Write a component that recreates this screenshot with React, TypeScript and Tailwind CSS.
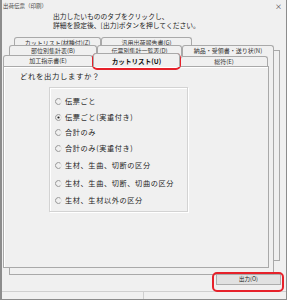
const FONT = { fontFamily: '"Noto Sans CJK JP", "Noto Sans", sans-serif' }

const ROW1 = [
  { label: 'カットリスト(材種付)(Z)', w: 'w-[87px]' },
  { label: '汎用出荷報告書(G)', w: 'w-[91px]' },
]
const ROW2 = [
  { label: '部位別集計表(B)', w: 'w-[88px]' },
  { label: '伝票別集計一覧表(D)', w: 'w-[85px]' },
  { label: '納品・受領書・送り状(N)', w: 'w-[92px]' },
]

const OPTIONS = [
  { label: '伝票ごと', h: 'h-[15px]', checked: false },
  { label: '伝票ごと(実重付き)', h: 'h-[16px]', checked: true },
  { label: '合計のみ', h: 'h-[15px]', checked: false },
  { label: '合計のみ(実重付き)', h: 'h-[17px]', checked: false },
  { label: '生材、生曲、切断の区分', h: 'h-[17px]', checked: false },
  { label: '生材、生曲、切断、切曲の区分', h: 'h-[18px]', checked: false },
  { label: '生材、生材以外の区分', h: 'h-[16px]', checked: false },
]

function Tab({ label, w, h = 'h-[10px]' }: { label: string; w: string; h?: string }) {
  return (
    <div
      className={`${w} ${h} flex items-start justify-center rounded-t-[3px] border border-b-0 border-[#a9a9a9] bg-[#f0f0f0] pt-[1px] text-[6px] leading-[7px] text-[#333]`}
    >
      {label}
    </div>
  )
}

function Radio({ checked }: { checked: boolean }) {
  return (
    <svg width="7" height="7" viewBox="0 0 7 7" className="shrink-0">
      <path d="M5.6 1.4 A3 3 0 1 0 5.6 5.6" fill="none" stroke="#8a8a8a" strokeWidth="0.9" />
      <path d="M5.6 1.4 A3 3 0 0 1 5.6 5.6" fill="none" stroke="#e0e0e0" strokeWidth="0.9" />
      {checked && <circle cx="3.5" cy="3.5" r="1.1" fill="#222" />}
    </svg>
  )
}

export default function App() {
  return (
    <div
      className="relative flex h-[300px] w-[287px] flex-col overflow-hidden border-l-[2px] border-r border-[#8c8c8c] bg-[#f0f0f0]"
      style={FONT}
    >
      {/* Title bar */}
      <div className="flex h-[12px] items-center justify-between pl-[1px] pr-[4px] text-[5.5px] text-[#444]">
        <span>出荷伝票（印刷）</span>
        <span className="text-[7px] text-[#333]">×</span>
      </div>

      {/* Instructions */}
      <div className="pl-[51px] text-[6.8px] leading-[9px] text-[#222]">
        <p>出力したいもののタブをクリックし、</p>
        <p>詳細を設定後、[出力]ボタンを押してください。</p>
      </div>

      {/* Tabs */}
      <div className="relative mt-[7px]">
        <div className="absolute left-[12px] top-[13px] h-[211px] w-[266px] border border-[#a9a9a9] bg-[#f0f0f0]" />
        <div className="absolute left-[7px] top-[14px] h-[224px] w-[265px] border border-[#a9a9a9] bg-[#f0f0f0]" />

        <div className="relative flex pl-[12px]">
          {ROW1.map((t) => (
            <Tab key={t.label} {...t} />
          ))}
        </div>
        <div className="relative -mt-[2px] flex pl-[7px]">
          {ROW2.map((t) => (
            <Tab key={t.label} {...t} h="h-[11px]" />
          ))}
        </div>
        <div className="relative -mt-[1px] flex h-[11px] items-end pl-[1px]">
          <Tab label="加工指示書(E)" w="w-[90px]" h="h-[11px]" />
          <div className="relative z-10 -mb-[1px] flex h-[14px] w-[87px] justify-center rounded-t-[3px] border border-b-0 border-[#a9a9a9] bg-[#f0f0f0] pt-[3px] text-[6.6px] font-bold leading-[8px] text-[#111]">
            カットリスト(U)
          </div>
          <Tab label="総符(E)" w="w-[88px]" h="h-[10px]" />
        </div>

        {/* Main page */}
        <div className="relative ml-[1px] flex h-[202px] w-[266px] flex-col border border-[#a9a9a9] bg-[#f0f0f0] shadow-[inset_1px_1px_0_#fff]">
          <p className="mt-[4px] pl-[16px] text-[7.4px] leading-[10px] tracking-[0.6px] text-[#222]">
            どれを出力しますか？
          </p>
          <div className="ml-[45px] mt-[6px] flex h-[125px] w-[139px] flex-col border border-[#d3d3d3] pl-[5px] pt-[6px] shadow-[inset_1px_1px_0_#fff,1px_1px_0_#fff]">
            {OPTIONS.map((o) => (
              <div key={o.label} className={`${o.h} flex items-center gap-[3px]`}>
                <Radio checked={o.checked} />
                <span className="text-[7.2px] tracking-[0.6px] text-[#222]">{o.label}</span>
              </div>
            ))}
          </div>
        </div>
      </div>

      {/* Footer */}
      <div className="flex h-[23px] items-center justify-end pr-[5px]">
        <button className="flex h-[11px] w-[65px] items-center justify-center border border-[#adadad] bg-[#e1e1e1] text-[5.5px] text-[#222]">
          出力(O)
        </button>
      </div>

      {/* Status bar */}
      <div className="flex h-[9px] border-t border-b border-[#cfcfcf] border-b-[#8c8c8c]">
        <div className="w-[142px] border-r border-[#cfcfcf]" />
        <div className="flex-1" />
      </div>

      {/* Highlights */}
      <div className="pointer-events-none absolute left-[90px] top-[53px] h-[17px] w-[89px] rounded-[5px] border-2 border-[#e6212a]" />
      <div className="pointer-events-none absolute left-[210px] top-[272px] h-[20px] w-[72px] rounded-[5px] border-2 border-[#e6212a]" />
    </div>
  )
}
